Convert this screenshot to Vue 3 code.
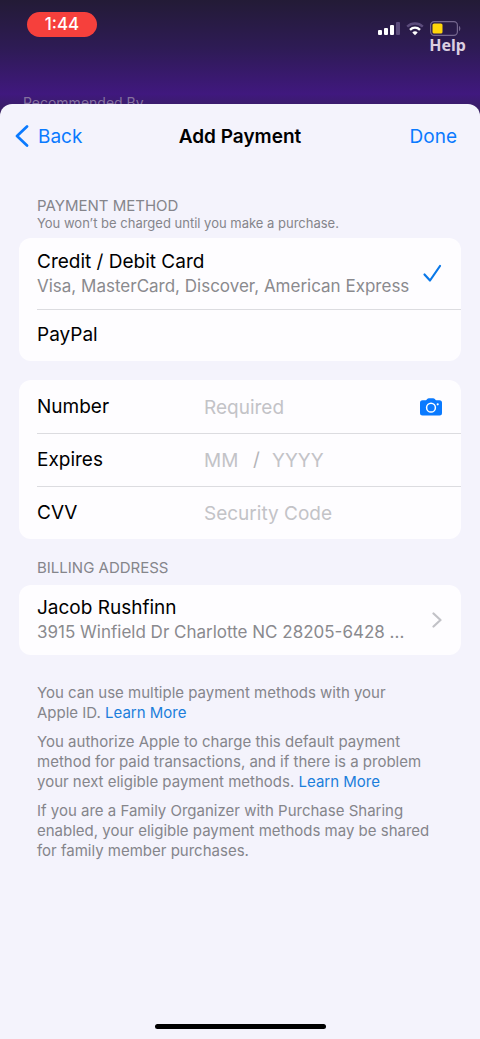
<script setup>
import { ref } from 'vue'

const method = ref('card')
const number = ref('')
const month = ref('')
const year = ref('')
const cvv = ref('')
</script>

<template>
  <div class="screen">
    <header class="status">
      <div class="status-row">
        <time class="clock">1:44</time>
        <div class="indicators">
          <div class="icons">
            <svg width="22" height="14" viewBox="0 0 22 14" aria-hidden="true">
              <rect x="0" y="8" width="4" height="5" rx="1" fill="#fff" />
              <rect x="6" y="6" width="4" height="7" rx="1" fill="#fff" />
              <rect x="12" y="3" width="4" height="10" rx="1" fill="#fff" />
              <rect x="18" y="0" width="4" height="13" rx="1" fill="#5c4c7c" />
            </svg>
            <svg width="18" height="14" viewBox="0 0 18 14" fill="none" aria-hidden="true">
              <path d="M1.2 4.7C5.6.5 12.4.5 16.8 4.7" stroke="#5c4c7c" stroke-width="2.4" />
              <path d="M4 7.8C6.9 5.1 11.1 5.1 14 7.8" stroke="#fff" stroke-width="2.4" />
              <path d="M6.3 10.4C7.8 9 10.2 9 11.7 10.4L9 13.2Z" fill="#fff" />
            </svg>
            <svg width="31" height="15" viewBox="0 0 31 15" aria-hidden="true">
              <rect x=".6" y=".6" width="26.8" height="13.8" rx="3.6" fill="none" stroke="#75678f" stroke-width="1.2" />
              <rect x="2.5" y="2.5" width="10" height="10" rx="1.6" fill="#ffd60a" />
              <path d="M29 5c1.8.5 1.8 4.500 0 5z" fill="#75678f" />
            </svg>
          </div>
          <a class="help" href="#">Help</a>
        </div>
      </div>
      <p class="behind">Recommended By</p>
    </header>

    <main class="sheet">
      <nav class="bar">
        <button type="button" class="nav-btn back">
          <svg width="14" height="22" viewBox="0 0 14 22" fill="none" aria-hidden="true">
            <path d="M12 1.500 2 11 12 20.500" stroke="#0a7aff" stroke-width="2.700" stroke-linecap="round" stroke-linejoin="round" />
          </svg>
          Back
        </button>
        <h1>Add Payment</h1>
        <button type="button" class="nav-btn done">Done</button>
      </nav>

      <form class="content" @submit.prevent>
        <div class="section-head">
          <h2>PAYMENT METHOD</h2>
          <p>You won’t be charged until you make a purchase.</p>
        </div>
        <div class="card">
          <label class="row option tall">
            <input v-model="method" type="radio" name="method" value="card" />
            <span class="text">
              <span class="title">Credit / Debit Card</span>
              <span class="sub">Visa, MasterCard, Discover, American Express</span>
            </span>
            <svg v-if="method === 'card'" width="20" height="19" viewBox="0 0 20 19" fill="none" aria-hidden="true">
              <path d="M2.500 10.500 8 16.500 18 2" stroke="#0a78e8" stroke-width="2.200" stroke-linecap="round" stroke-linejoin="round" />
            </svg>
          </label>
          <label class="row option">
            <input v-model="method" type="radio" name="method" value="paypal" />
            <span class="title">PayPal</span>
          </label>
        </div>

        <div class="card fields">
          <div class="row">
            <label for="number">Number</label>
            <input id="number" v-model="number" class="grow" type="text" placeholder="Required" />
            <button type="button" class="camera" aria-label="Scan card">
              <svg width="22" height="18" viewBox="0 0 22 18" aria-hidden="true">
                <path d="M2.500 2.200H6L7.500.8Q8 .3 8.700.3H13.300Q14 .3 14.500.8L16 2.200H19.500Q22 2.200 22 4.700V15Q22 17.500 19.500 17.500H2.500Q0 17.500 0 15V4.700Q0 2.200 2.500 2.200Z" fill="#0a7aff" />
                <circle cx="11" cy="9.700" r="4.400" fill="none" stroke="#fff" stroke-width="1.500" />
                <circle cx="17.700" cy="6.300" r="1.100" fill="#fff" />
              </svg>
            </button>
          </div>
          <div class="row">
            <label for="month">Expires</label>
            <input id="month" v-model="month" class="month" type="text" placeholder="MM" />
            <span class="slash">/</span>
            <input v-model="year" class="grow" type="text" placeholder="YYYY" aria-label="Expiry year" />
          </div>
          <div class="row">
            <label for="cvv">CVV</label>
            <input id="cvv" v-model="cvv" class="grow" type="text" placeholder="Security Code" />
          </div>
        </div>

        <div class="section-head billing">
          <h2>BILLING ADDRESS</h2>
        </div>
        <div class="card">
          <button type="button" class="row address">
            <span class="text">
              <span class="title">Jacob Rushfinn</span>
              <span class="sub">3915 Winfield Dr Charlotte NC 28205-6428 ...</span>
            </span>
            <svg width="10" height="16" viewBox="0 0 10 16" fill="none" aria-hidden="true">
              <path d="M1.500 1.500 8.500 8 1.500 14.500" stroke="#c2c2c7" stroke-width="2.200" stroke-linecap="round" stroke-linejoin="round" />
            </svg>
          </button>
        </div>

        <div class="notes">
          <p>You can use multiple payment methods with your Apple&nbsp;ID. <a href="#">Learn More</a></p>
          <p>You authorize Apple to charge this default payment method for paid transactions, and if there is a problem your next eligible payment methods. <a href="#">Learn More</a></p>
          <p>If you are a Family Organizer with Purchase Sharing enabled, your eligible payment methods may be shared for family member purchases.</p>
        </div>
      </form>
      <div class="home"></div>
    </main>
  </div>
</template>

<style>
body {
  margin: 0;
  background: #f4f3fc;
}
</style>

<style scoped>
.screen {
  display: flex;
  flex-direction: column;
  min-height: 100vh;
  background: linear-gradient(#231b36 0, #2e1b55 48px, #40187e 94px, #34205a 116px, #f4f3fc 116px);
  font-family: Inter, "Liberation Sans", sans-serif;
  color: #000;
}
h1, h2, p { margin: 0; font-weight: 400; }
button, input {
  font: inherit;
  color: inherit;
  border: 0;
  padding: 0;
  background: none;
}
button { cursor: pointer; }
svg { flex: none; display: block; }
a { color: #1b7edb; text-decoration: none; }

.status {
  box-sizing: border-box;
  height: 104px;
  padding: 12px 14px 0 23px;
  overflow: hidden;
}
.status-row {
  display: flex;
  justify-content: space-between;
  height: 82px;
  padding-left: 4px;
}
.clock {
  width: 70px;
  height: 25px;
  border-radius: 13px;
  background: #f6403c;
  color: #fff;
  font-size: 17px;
  font-weight: 500;
  line-height: 25px;
  text-align: center;
}
.indicators {
  display: flex;
  flex-direction: column;
  align-items: flex-end;
  padding-top: 9px;
}
.icons {
  display: flex;
  align-items: center;
  gap: 6px;
  padding-right: 5px;
}
.help {
  color: #dccfe0;
  font-family: "Noto Sans", sans-serif;
  font-size: 16px;
  font-weight: 700;
  line-height: 18px;
}
.behind {
  color: #85719f;
  font-size: 14px;
  line-height: 18px;
}

.sheet {
  flex: 1;
  display: flex;
  flex-direction: column;
  background: #f4f3fc;
  border-radius: 12px 12px 0 0;
}
.bar {
  display: grid;
  grid-template-columns: 1fr auto 1fr;
  align-items: center;
  height: 64px;
  padding: 0 15px;
  font-size: 19px;
}
.bar h1 {
  font-size: 19px;
  font-weight: 600;
}
.nav-btn { color: #0a7aff; }
.back {
  justify-self: start;
  display: flex;
  align-items: center;
  gap: 9px;
}
.done {
  justify-self: end;
  padding-right: 8px;
}

.content { padding: 28px 19px 0; }
.section-head {
  padding: 0 18px 7px;
  color: #85858b;
}
.section-head h2 {
  font-size: 15px;
  line-height: 20px;
}
.section-head p {
  font-size: 13px;
  line-height: 15px;
}
.billing { padding-top: 19px; }

.card {
  background: #fefdff;
  border-radius: 12px;
  overflow: hidden;
}
.fields { margin-top: 19px; }
.row {
  position: relative;
  box-sizing: border-box;
  display: flex;
  align-items: center;
  width: 100%;
  min-height: 53px;
  padding: 0 19px 0 18px;
  font-size: 19px;
  text-align: left;
}
.row + .row::before {
  content: "";
  position: absolute;
  top: 0;
  left: 18px;
  right: 0;
  height: 1px;
  background: #dcdce0;
}
.text {
  flex: 1;
  min-width: 0;
  display: flex;
  flex-direction: column;
}
.title { font-size: 19px; line-height: 24px; }
.sub {
  color: #8a8a8e;
  font-size: 17px;
  line-height: 24px;
  white-space: nowrap;
}
.option {
  min-height: 52px;
  cursor: pointer;
}
.option input {
  position: absolute;
  opacity: 0;
}
.tall { min-height: 71px; }
.address {
  min-height: 70px;
  cursor: pointer;
}

.fields label {
  flex: none;
  width: 167px;
}
.fields input {
  min-width: 0;
  height: 28px;
  padding-top: 2px;
  outline: none;
}
.fields input::placeholder { color: #c3c3c7; opacity: 1; }
.fields .grow { flex: 1; }
.month { width: 49px; }
.slash { width: 19px; color: #b4b4b8; }

.notes {
  display: flex;
  flex-direction: column;
  gap: 9px;
  padding: 28px 18px;
  color: #85858b;
  font-size: 15px;
  line-height: 20px;
}

.home {
  flex: none;
  width: 171px;
  height: 5px;
  margin: auto auto 10px;
  border-radius: 3px;
  background: #000;
}
</style>
